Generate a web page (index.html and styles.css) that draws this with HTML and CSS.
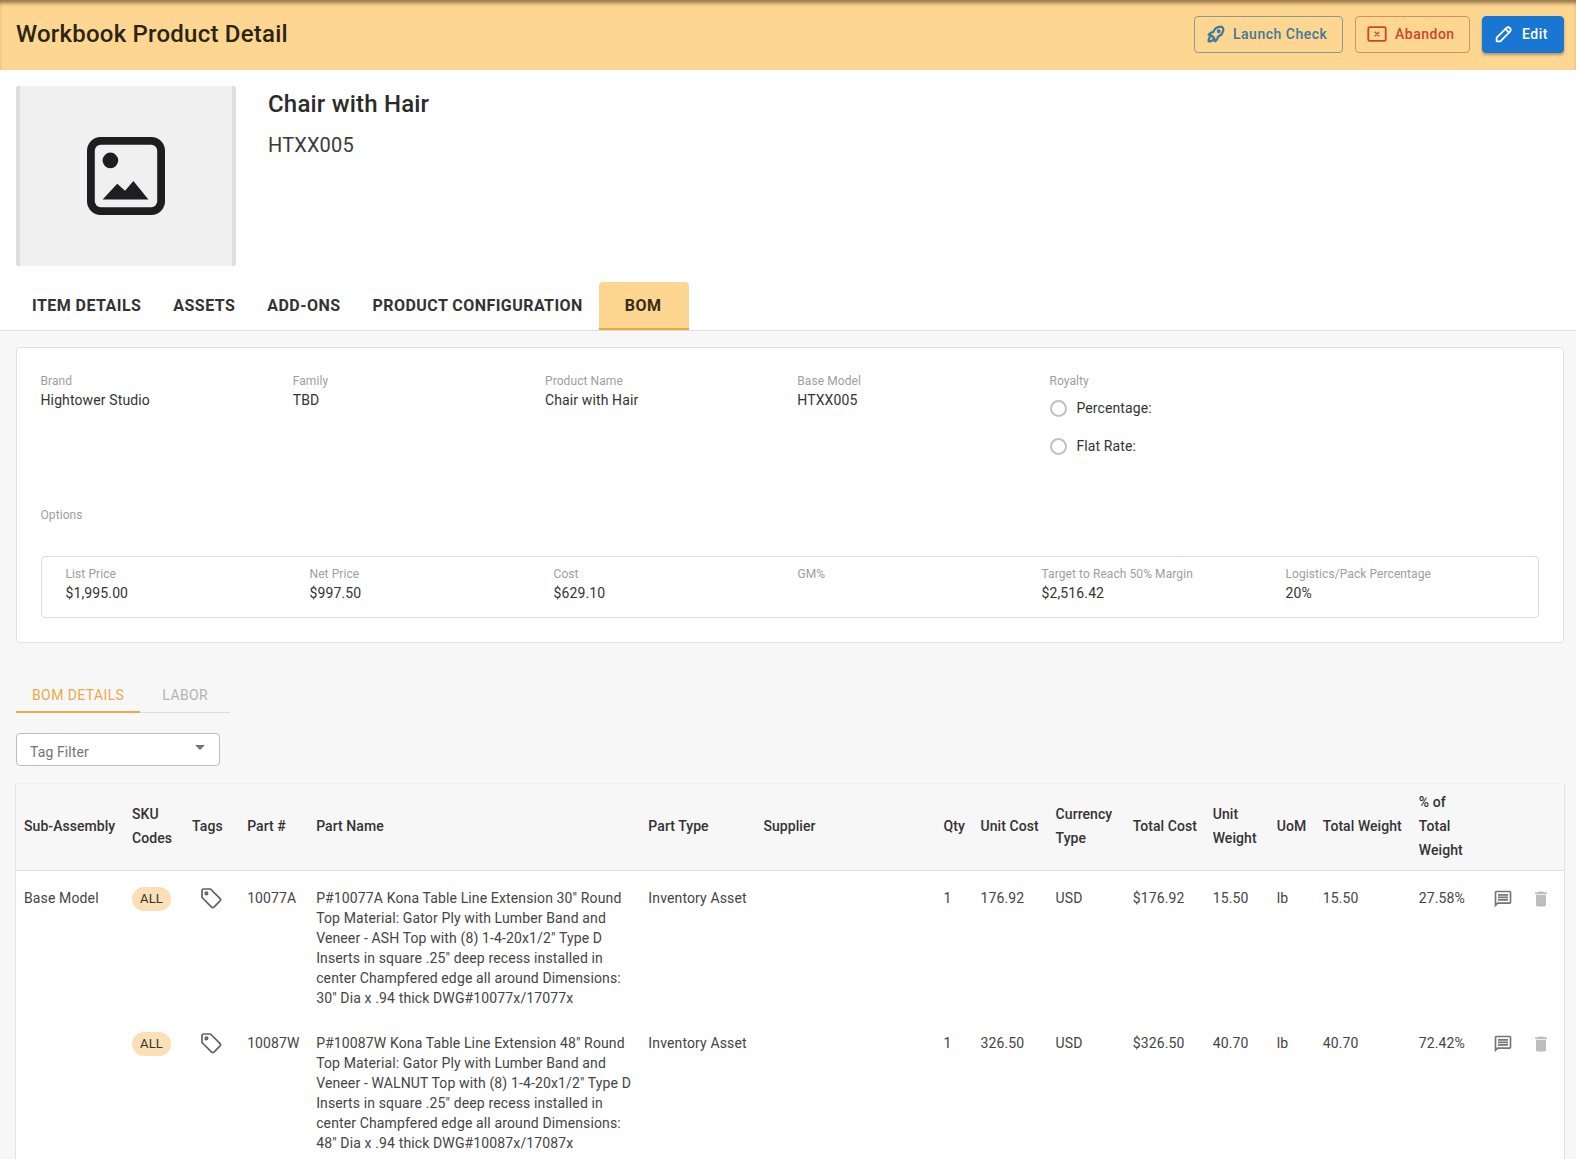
FILE: index.html
```html
<!DOCTYPE html>
<html lang="en">
<head>
<meta charset="utf-8">
<title>Workbook Product Detail</title>
<link rel="stylesheet" href="styles.css">
</head>
<body>
<header class="topbar">
  <h1 class="page-title">Workbook Product Detail</h1>
  <div class="actions">
    <button class="btn btn-launch">
      <svg class="btn-icon" viewBox="0 0 24 24" fill="none" stroke="currentColor" stroke-width="2.400" stroke-linecap="round" stroke-linejoin="round"><path d="M4 13a8 8 0 0 1 7 7a6 6 0 0 0 3 -5a9 9 0 0 0 6 -8a3 3 0 0 0 -3 -3a9 9 0 0 0 -8 6a6 6 0 0 0 -5 3"/><path d="M7 14a6 6 0 0 0 -3 6a6 6 0 0 0 6 -3"/><circle cx="15" cy="9" r="1"/></svg>
      <span>Launch Check</span>
    </button>
    <button class="btn btn-abandon">
      <svg class="btn-icon" viewBox="0 0 24 24" fill="none" stroke="currentColor" stroke-width="2" stroke-linecap="round" stroke-linejoin="round"><rect x="2.500" y="4.500" width="19" height="15" rx="1.500"/><path d="M10 10l4 4M14 10l-4 4" stroke-width="1.600"/></svg>
      <span>Abandon</span>
    </button>
    <button class="btn btn-edit">
      <svg class="btn-icon" viewBox="0 0 24 24" fill="none" stroke="currentColor" stroke-width="2" stroke-linecap="round" stroke-linejoin="round"><path d="M4 20h4l10.500 -10.500a2.828 2.828 0 1 0 -4 -4l-10.500 10.500v4"/><path d="M13.500 6.500l4 4"/></svg>
      <span>Edit</span>
    </button>
  </div>
</header>

<section class="hero">
  <div class="thumb">
    <svg class="thumb-icon" viewBox="0 0 80 80"><rect x="4" y="4" width="72" height="72" rx="10" fill="none" stroke="#1e1e20" stroke-width="8"/><circle cx="24" cy="24" r="8" fill="#1e1e20"/><path d="M16 64L31 48l8 7 8.600-10L63 64z" fill="#1e1e20"/></svg>
  </div>
  <div class="hero-text">
    <h2 class="product-name">Chair with Hair</h2>
    <div class="product-code">HTXX005</div>
  </div>
</section>

<nav class="tabs">
  <a class="tab">ITEM DETAILS</a>
  <a class="tab">ASSETS</a>
  <a class="tab">ADD-ONS</a>
  <a class="tab">PRODUCT CONFIGURATION</a>
  <a class="tab tab-active">BOM</a>
</nav>

<main class="content">
  <section class="card">
    <div class="info-grid">
      <div><div class="label">Brand</div><div class="value">Hightower Studio</div></div>
      <div><div class="label">Family</div><div class="value">TBD</div></div>
      <div><div class="label">Product Name</div><div class="value">Chair with Hair</div></div>
      <div><div class="label">Base Model</div><div class="value">HTXX005</div></div>
      <div>
        <div class="label">Royalty</div>
        <div class="radio-row"><span class="radio"></span>Percentage:</div>
        <div class="radio-row"><span class="radio"></span>Flat Rate:</div>
      </div>
    </div>
    <div class="label">Options</div>
    <div class="price-box">
      <div><div class="label">List Price</div><div class="value">$1,995.00</div></div>
      <div><div class="label">Net Price</div><div class="value">$997.50</div></div>
      <div><div class="label">Cost</div><div class="value">$629.10</div></div>
      <div><div class="label">GM%</div><div class="value"></div></div>
      <div><div class="label">Target to Reach 50% Margin</div><div class="value">$2,516.42</div></div>
      <div><div class="label">Logistics/Pack Percentage</div><div class="value">20%</div></div>
    </div>
  </section>

  <div class="subtabs">
    <a class="subtab subtab-active">BOM DETAILS</a>
    <a class="subtab subtab-plain">LABOR</a>
  </div>

  <div class="filter">
    <span class="filter-text">Tag Filter</span>
    <svg class="filter-arrow" viewBox="0 0 24 24"><path d="M7 10l5 5 5-5z" fill="#757575"/></svg>
  </div>

  <div class="table-wrap">
    <table class="bom">
      <colgroup>
        <col class="c1"><col class="c2"><col class="c3"><col class="c4"><col class="c5"><col class="c6"><col class="c7"><col class="c8"><col class="c9"><col class="c10"><col class="c11"><col class="c12"><col class="c13"><col class="c14"><col class="c15"><col class="c16"><col class="c17">
      </colgroup>
      <thead>
        <tr>
          <th>Sub-Assembly</th><th>SKU Codes</th><th>Tags</th><th>Part #</th><th>Part Name</th><th>Part Type</th><th>Supplier</th><th>Qty</th><th>Unit Cost</th><th>Currency Type</th><th>Total Cost</th><th>Unit Weight</th><th>UoM</th><th>Total Weight</th><th class="th-narrow">% of Total Weight</th><th></th><th></th>
        </tr>
      </thead>
      <tbody>
        <tr>
          <td>Base Model</td>
          <td><span class="chip">ALL</span></td>
          <td><svg class="tag" viewBox="0 0 24 24" fill="none" stroke="#616161" stroke-width="1.700" stroke-linejoin="round"><path d="M3 4.500a1.500 1.500 0 0 1 1.500-1.500h7l9.600 9.600a1.600 1.600 0 0 1 0 2.300l-6.200 6.200a1.600 1.600 0 0 1-2.300 0L3 11.500z"/><circle cx="7.400" cy="7.400" r="1.200"/></svg></td>
          <td>10077A</td>
          <td>P#10077A Kona Table Line Extension 30" Round Top Material: Gator Ply with Lumber Band and Veneer - ASH Top with (8) 1-4-20x1/2" Type D Inserts in square .25" deep recess installed in center Champfered edge all around Dimensions: 30" Dia x .94 thick DWG#10077x/17077x</td>
          <td>Inventory Asset</td>
          <td></td>
          <td>1</td>
          <td>176.92</td>
          <td>USD</td>
          <td>$176.92</td>
          <td>15.50</td>
          <td>lb</td>
          <td>15.50</td>
          <td>27.58%</td>
          <td><svg class="act" viewBox="0 0 24 24"><path fill="#757575" d="M20 2H4c-1.100 0-2 .9-2 2v18l4-4h14c1.100 0 2-.9 2-2V4c0-1.100-.9-2-2-2zm0 14H5.170L4 17.170V4h16v12zM6 12h12v2H6zm0-3h12v2H6zm0-3h12v2H6z"/></svg></td>
          <td><svg class="act" viewBox="0 0 24 24"><path fill="#bdbdbd" d="M6 19c0 1.100.9 2 2 2h8c1.100 0 2-.9 2-2V7H6v12zM19 4h-3.500l-1-1h-5l-1 1H5v2h14V4z"/></svg></td>
        </tr>
        <tr>
          <td></td>
          <td><span class="chip">ALL</span></td>
          <td><svg class="tag" viewBox="0 0 24 24" fill="none" stroke="#616161" stroke-width="1.700" stroke-linejoin="round"><path d="M3 4.500a1.500 1.500 0 0 1 1.500-1.500h7l9.600 9.600a1.600 1.600 0 0 1 0 2.300l-6.200 6.200a1.600 1.600 0 0 1-2.300 0L3 11.500z"/><circle cx="7.400" cy="7.400" r="1.200"/></svg></td>
          <td>10087W</td>
          <td>P#10087W Kona Table Line Extension 48" Round Top Material: Gator Ply with Lumber Band and Veneer - WALNUT Top with (8) 1-4-20x1/2" Type D Inserts in square .25" deep recess installed in center Champfered edge all around Dimensions: 48" Dia x .94 thick DWG#10087x/17087x</td>
          <td>Inventory Asset</td>
          <td></td>
          <td>1</td>
          <td>326.50</td>
          <td>USD</td>
          <td>$326.50</td>
          <td>40.70</td>
          <td>lb</td>
          <td>40.70</td>
          <td>72.42%</td>
          <td><svg class="act" viewBox="0 0 24 24"><path fill="#757575" d="M20 2H4c-1.100 0-2 .9-2 2v18l4-4h14c1.100 0 2-.9 2-2V4c0-1.100-.9-2-2-2zm0 14H5.170L4 17.170V4h16v12zM6 12h12v2H6zm0-3h12v2H6zm0-3h12v2H6z"/></svg></td>
          <td><svg class="act" viewBox="0 0 24 24"><path fill="#bdbdbd" d="M6 19c0 1.100.9 2 2 2h8c1.100 0 2-.9 2-2V7H6v12zM19 4h-3.500l-1-1h-5l-1 1H5v2h14V4z"/></svg></td>
        </tr>
      </tbody>
    </table>
  </div>
</main>
</body>
</html>
```

FILE: styles.css
```css
* { box-sizing: border-box; }
html, body { margin: 0; padding: 0; height: 1159px; overflow: hidden; }
body { font-family: Roboto, "Liberation Sans", sans-serif; font-size: 14px; color: #333; background: #f7f7f7; }

.topbar { height: 70px; background: #fdd692; display: flex; align-items: center; justify-content: space-between; padding: 0 12px 0 16px; box-shadow: inset 0 5px 4px -2px rgba(70, 50, 20, .6); }
.page-title { margin: 0 0 2px; font-size: 24px; font-weight: 500; letter-spacing: .22px; color: #2c2414; }
.actions { display: flex; gap: 12px; margin-top: -2px; }
.btn { height: 37px; display: flex; align-items: center; border-radius: 4px; font: 500 14px Roboto, sans-serif; letter-spacing: .5px; white-space: nowrap; background: transparent; padding: 0 0 0 10px; border: 1px solid; }
.btn-icon { width: 22px; height: 22px; flex: none; }
.btn-launch { color: #44789a; border-color: #8d9a94; width: 149px; gap: 6px; }
.btn-abandon { color: #c9472a; border-color: #d8905c; width: 115px; gap: 7px; }
.btn-edit { color: #fff; background: #1976d2; border-color: #1976d2; width: 82px; gap: 7px; box-shadow: 0 2px 3px rgba(0, 0, 0, .3); }

.hero { background: #fff; display: flex; padding: 16px; gap: 32px; height: 212px; }
.thumb { width: 220px; height: 180px; background: #f0f0f1; border-left: 4px solid #dcdde0; border-right: 4px solid #dcdde0; border-radius: 2px; display: flex; align-items: center; justify-content: center; }
.thumb-icon { width: 78px; height: 78px; }
.hero-text { padding-top: 3px; }
.product-name { margin: 0; font-size: 24px; font-weight: 500; line-height: 30px; letter-spacing: .2px; color: #2b2b2b; }
.product-code { margin-top: 11px; font-size: 20px; line-height: 30px; color: #3a3a3a; letter-spacing: .15px; }

.tabs { background: #fff; display: flex; height: 49px; padding-left: 16px; border-bottom: 1px solid #dedede; }
.tab { padding: 0 16px 2px; display: flex; align-items: center; font-size: 16px; font-weight: 700; letter-spacing: .45px; color: #333; }
.tab-active { background: #fdd692; border-bottom: 2px solid #f0a838; border-radius: 4px 4px 0 0; padding: 0 28px 0 26px; color: #3a2c14; }

.content { padding: 16px 12px 0 16px; }
.card { background: #fff; border: 1px solid #e2e2e2; border-radius: 4px; padding: 25px 24px 24px 23.500px; height: 296px; }
.info-grid { display: grid; grid-template-columns: repeat(4, 252.250px) 1fr; height: 134px; }
.label { font-size: 12px; line-height: 16px; letter-spacing: .08px; color: #9e9e9e; }
.value { font-size: 14px; line-height: 20px; margin-top: 1px; letter-spacing: .12px; color: #333; }
.radio-row { display: flex; align-items: center; gap: 10px; height: 38px; font-size: 14px; letter-spacing: .1px; }
.radio { width: 17px; height: 17px; border: 2px solid #c0c0c0; border-radius: 50%; display: block; }
.price-box { margin-top: 33px; height: 62px; border: 1px solid #dedede; border-radius: 4px; padding: 9px 24px; display: grid; grid-template-columns: repeat(6, 244px); }

.subtabs { display: flex; margin-top: 35px; width: 214px; height: 35px; border-bottom: 1px solid #dedede; }
.subtab { display: flex; align-items: center; height: 35px; font-size: 14px; letter-spacing: .4px; color: #b4b4b4; }
.subtab-active { padding: 0 16px; color: #e9ab4a; border-bottom: 2px solid #e9ab4a; }
.subtab-plain { padding: 0 0 2px 22px; }

.filter { margin-top: 20px; width: 204px; height: 33px; background: #fff; border: 1px solid #bdbdbd; border-radius: 4px; display: flex; align-items: center; justify-content: space-between; padding: 0 13px; font-size: 14px; color: #757575; letter-spacing: .1px; }
.filter-text { padding-top: 4px; }
.filter-arrow { width: 24px; height: 24px; margin-right: -6px; margin-top: -6px; }

.table-wrap { margin-top: 18px; background: #fff; box-shadow: 1px 0 1px rgba(0, 0, 0, .08), -1px 0 1px rgba(0, 0, 0, .08); }
.bom { width: 100%; table-layout: fixed; border-collapse: collapse; }
.bom th { background: #f7f7f7; height: 86px; padding: 0 4px 2px 8px; text-align: left; font-size: 14px; font-weight: 500; line-height: 24px; letter-spacing: .06px; color: #333; border-bottom: 1px solid #e0e0e0; vertical-align: middle; }
.bom th.th-narrow { padding-right: 18px; }
.bom td { padding: 17px 8px 8px; vertical-align: top; font-size: 14px; line-height: 20px; letter-spacing: .13px; color: #444; }
.chip { display: inline-block; background: #fbdfb6; border-radius: 12px; padding: 0 8px; line-height: 24px; margin-top: -2px; font-size: 13px; letter-spacing: .1px; color: #333; }
.tag { width: 24px; height: 24px; display: block; margin: -2px 0 0 7px; }
.act { width: 20px; height: 20px; display: block; margin: 1px 0 0 -2px; }

.c1 { width: 108px; } .c2 { width: 60px; } .c3 { width: 55px; } .c4 { width: 69px; } .c5 { width: 332px; }
.c6 { width: 115px; } .c7 { width: 180px; } .c8 { width: 37px; } .c9 { width: 75px; } .c10 { width: 77px; }
.c11 { width: 80px; } .c12 { width: 64px; } .c13 { width: 46px; } .c14 { width: 96px; } .c15 { width: 76px; }
.c16 { width: 38px; } .c17 { width: 39px; }
```
